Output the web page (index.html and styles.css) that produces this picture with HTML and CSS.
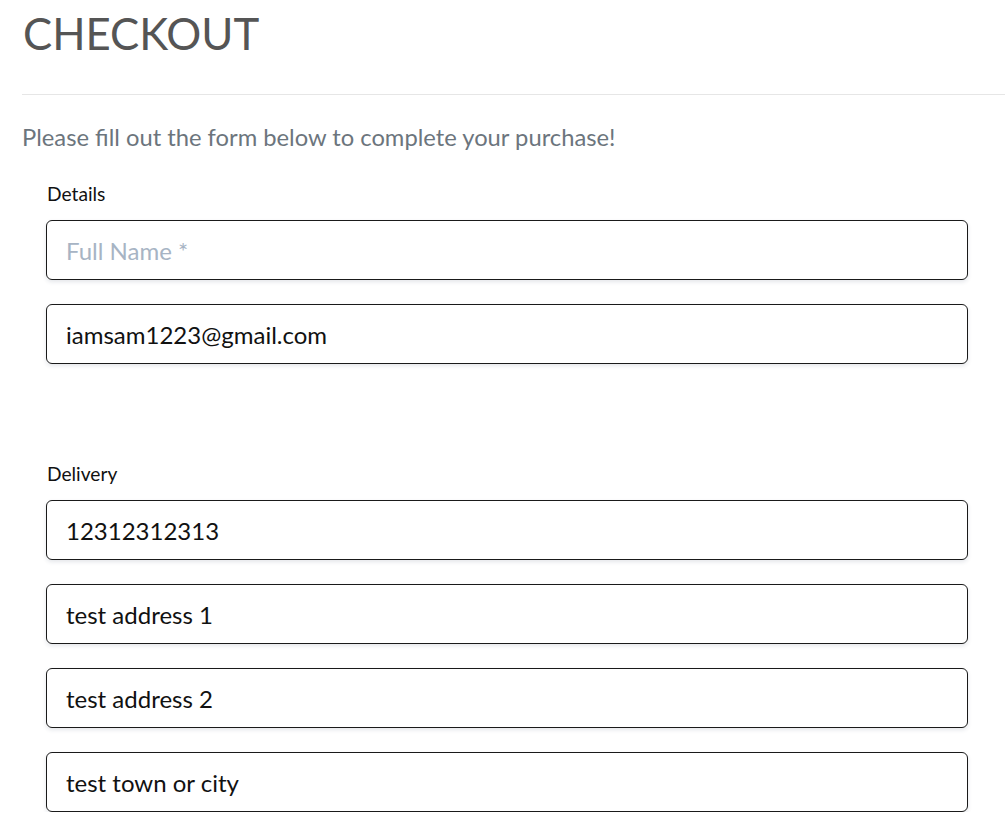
FILE: index.html
```html
<!DOCTYPE html>
<html>
<head>
<meta charset="utf-8">
<link rel="stylesheet" href="styles.css">
</head>
<body>
<div class="page">
  <h1 class="title">CHECKOUT</h1>
  <hr class="rule">
  <p class="lead">Please fill out the form below to complete your purchase!</p>
  <form class="form">
    <div class="group">
      <div class="label">Details</div>
      <input class="field" type="text" placeholder="Full Name *">
      <input class="field" type="text" value="iamsam1223@gmail.com">
    </div>
    <div class="group delivery">
      <div class="label">Delivery</div>
      <input class="field" type="text" value="12312312313">
      <input class="field" type="text" value="test address 1">
      <input class="field" type="text" value="test address 2">
      <input class="field" type="text" value="test town or city">
    </div>
  </form>
</div>
</body>
</html>
```

FILE: styles.css
```css
html, body {
  margin: 0;
  padding: 0;
  background: #fff;
  font-family: Lato, "Open Sans", sans-serif;
}
.page {
  padding-left: 22px;
  overflow: hidden;
}
.title {
  margin: 0;
  padding-top: 7px;
  padding-left: 1px;
  font-size: 43.7px;
  font-weight: 400;
  line-height: 52px;
  color: #555555;
}
.rule {
  margin: 35px 0 0 0;
  border: 0;
  border-top: 1px solid #e6e6e6;
  height: 0;
}
.lead {
  margin: 26px 0 0 0;
  font-size: 23.75px;
  line-height: 32px;
  color: #6c757d;
}
.form {
  padding: 0 37px 0 24px;
  margin-top: 29px;
}
.group {
  display: flex;
  flex-direction: column;
  gap: 24px;
}
.delivery {
  margin-top: 98px;
}
.label {
  padding-left: 1px;
  font-size: 19.2px;
  line-height: 24px;
  color: #111;
  margin-bottom: -10px;
}
.field {
  box-sizing: border-box;
  width: 100%;
  height: 60px;
  margin: 0;
  padding: 0 19px;
  border: 1px solid #1a1a1a;
  border-radius: 6px;
  box-shadow: 0 2px 4px rgba(30, 50, 80, 0.12);
  font-family: Lato, "Open Sans", sans-serif;
  font-size: 24px;
  color: #111;
  background: #fff;
  outline: none;
}
.field::placeholder {
  color: #a7b4c4;
}
```
